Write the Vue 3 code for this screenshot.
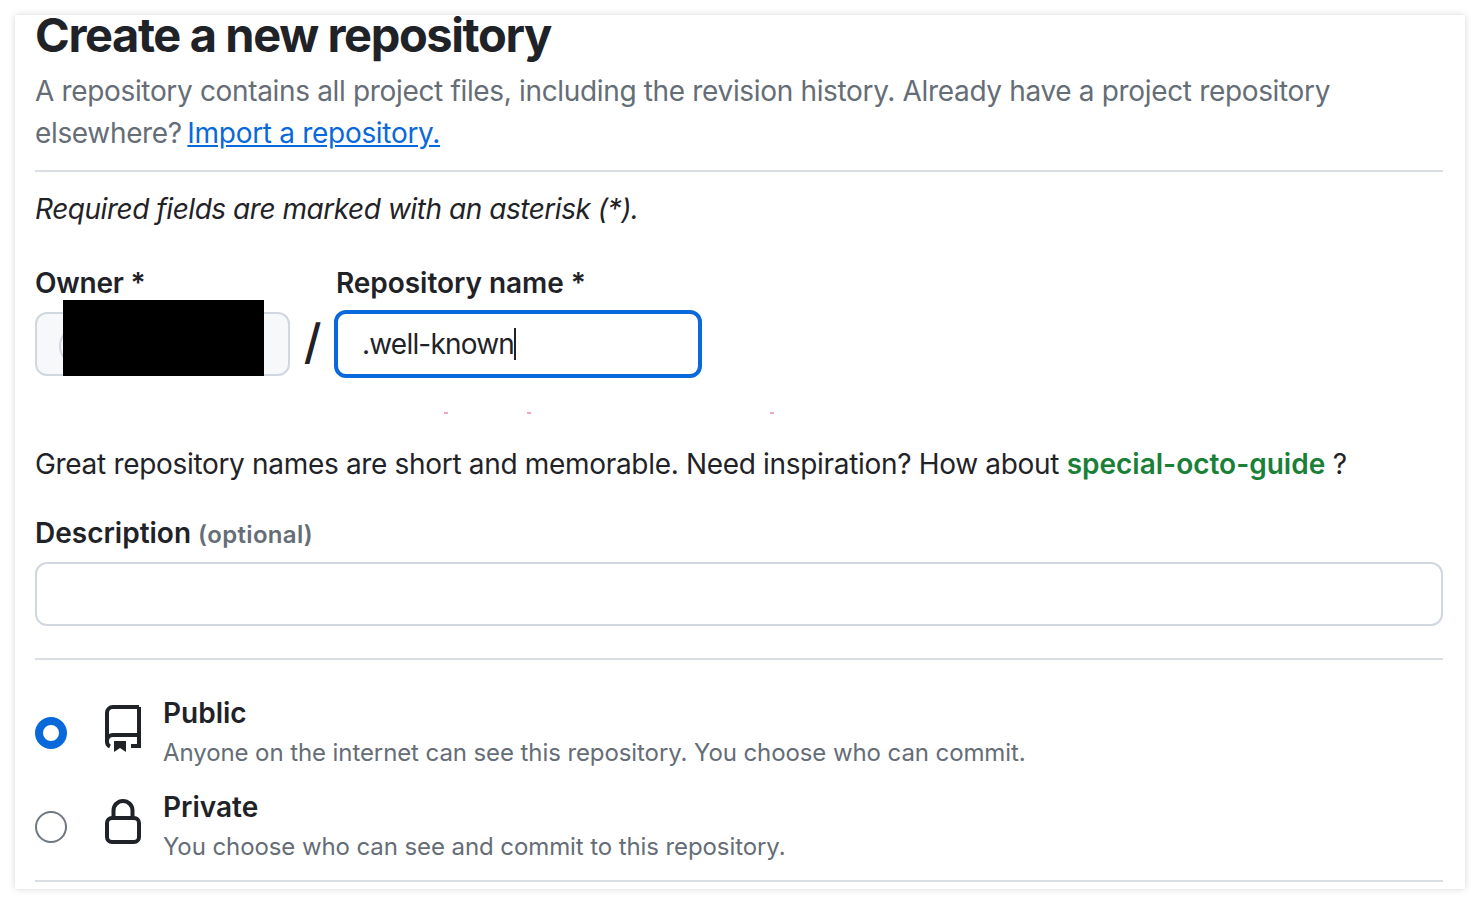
<template>
  <main class="page">
    <section class="card">
      <h1 class="title">Create a new repository</h1>
      <p class="lead">
        A repository contains all project files, including the revision history. Already have a project repository<br />
        elsewhere? <a class="link" href="#">Import a repository.</a>
      </p>
      <hr class="rule rule-top" />
      <p class="required">Required fields are marked with an asterisk (*).</p>

      <div class="names">
        <div class="owner">
          <label class="label owner-label">Owner *</label>
          <div class="owner-box">
            <span class="avatar"></span>
            <span class="redact"></span>
          </div>
        </div>
        <span class="slash">/</span>
        <div class="repo">
          <label class="label repo-label">Repository name *</label>
          <div class="repo-box"><span class="repo-text">.well-known</span><span class="caret"></span></div>
        </div>
      </div>

      <div class="specks">
        <i class="speck s1"></i>
        <i class="speck s2"></i>
        <i class="speck s3"></i>
      </div>

      <p class="hint">
        Great repository names are short and memorable. Need inspiration? How about
        <strong class="suggest">special-octo-guide</strong> ?
      </p>

      <div class="desc-label">Description <span class="optional">(optional)</span></div>
      <div class="desc-box"></div>
      <hr class="rule rule-mid" />

      <div class="option public">
        <span class="radio on"></span>
        <svg class="icon book" viewBox="0 0 36 48" fill="none" stroke="#1f2328" stroke-width="4">
          <path d="M34 2H8a6 6 0 0 0-6 6v29a5 5 0 0 0 3 4.5"/>
          <path d="M2 36a6 6 0 0 1 6-6h26"/>
          <path d="M34 2v39h-8"/>
          <path d="M9 36h12v11l-6-4-6 4Z" fill="#1f2328" stroke="none"/>
        </svg>
        <div class="option-text">
          <div class="option-title">Public</div>
          <div class="option-sub">Anyone on the internet can see this repository. You choose who can commit.</div>
        </div>
      </div>

      <div class="option private">
        <span class="radio"></span>
        <svg class="icon lock" viewBox="0 0 36 45" fill="none" stroke="#1f2328" stroke-width="4">
          <rect x="2" y="19" width="32" height="24" rx="5"/>
          <path d="M8.5 19v-7.5a9.5 9.5 0 0 1 19 0V19"/>
        </svg>
        <div class="option-text">
          <div class="option-title">Private</div>
          <div class="option-sub">You choose who can see and commit to this repository.</div>
        </div>
      </div>
      <hr class="rule rule-bottom" />
    </section>
  </main>
</template>

<script setup>
</script>

<style>
html, body { margin: 0; background: #fff; }
</style>

<style scoped>
.page {
  box-sizing: border-box;
  width: 1480px;
  height: 904px;
  padding: 15px;
  font-family: Inter, "Liberation Sans", sans-serif;
  color: #1f2328;
}
.card {
  box-sizing: border-box;
  height: 874px;
  padding: 0 22px 0 20px;
  background: #fff;
  box-shadow: 0 0 7px rgba(0, 0, 0, 0.16);
}
.title {
  margin: 0;
  font-size: 47px;
  line-height: 40px;
  font-weight: 700;
  letter-spacing: -1.39px;
}
.lead {
  margin: 15px 0 0;
  font-size: 28px;
  line-height: 42px;
  letter-spacing: -0.34px;
  color: #656d76;
}
.link { margin-left: -2px; color: #0969da; text-decoration: underline; letter-spacing: -0.3px; }
.rule {
  margin: 0;
  border: 0;
  height: 2px;
  background: #d8dee4;
}
.rule-top { margin-top: 16px; }
.required {
  margin: 19px 0 0;
  font-size: 28px;
  line-height: 36px;
  font-style: italic;
  letter-spacing: -0.46px;
}
.names { display: flex; align-items: flex-start; margin-top: 38px; }
.owner { width: 255px; position: relative; }
.label {
  display: block;
  font-size: 28px;
  line-height: 36px;
  font-weight: 600;
}
.owner-label { letter-spacing: -0.25px; }
.repo-label { padding-left: 2px; letter-spacing: -0.05px; }
.owner-box {
  box-sizing: border-box;
  position: relative;
  height: 64px;
  margin-top: 11px;
  background: #f6f8fa;
  border: 2px solid #d0d7de;
  border-radius: 12px;
}
.avatar {
  position: absolute;
  left: 22px;
  top: 12px;
  width: 40px;
  height: 40px;
  border-radius: 50%;
  border: 2px solid #d0d7de;
  box-sizing: border-box;
}
.redact {
  position: absolute;
  left: 26px;
  top: -14px;
  width: 201px;
  height: 76px;
  background: #000;
}
.slash {
  width: 44px;
  padding-left: 1px;
  box-sizing: border-box;
  margin-top: 45px;
  text-align: center;
  font-size: 48px;
  line-height: 64px;
  font-weight: 500;
}
.repo { width: 368px; }
.repo-box {
  box-sizing: border-box;
  height: 68px;
  margin-top: 9px;
  padding-left: 24px;
  display: flex;
  align-items: center;
  border: 4px solid #0969da;
  border-radius: 12px;
  font-size: 28px;
  letter-spacing: -0.8px;
}
.caret { width: 2px; height: 32px; background: #1f2328; }
.specks { position: relative; height: 2px; margin-top: 34px; }
.speck { position: absolute; top: 0; width: 4px; height: 2px; background: #f3a6b8; }
.s1 { left: 409px; }
.s2 { left: 492px; }
.s3 { left: 735px; }
.hint { margin: 32px 0 0; font-size: 28px; line-height: 36px; letter-spacing: -0.32px; }
.suggest { color: #1a7f37; font-weight: 600; letter-spacing: 0; }
.desc-label { margin-top: 33px; font-size: 28px; line-height: 36px; font-weight: 600; }
.optional { font-size: 24px; color: #656d76; letter-spacing: 0.33px; }
.desc-box {
  box-sizing: border-box;
  height: 64px;
  margin-top: 9px;
  border: 2px solid #d0d7de;
  border-radius: 12px;
}
.rule-mid { margin-top: 32px; }
.option { display: flex; position: relative; padding-left: 128px; }
.public { margin-top: 35px; }
.private { margin-top: 18px; }
.radio {
  box-sizing: border-box;
  position: absolute;
  left: 0;
  top: 22px;
  width: 32px;
  height: 32px;
  border-radius: 50%;
  border: 2px solid #6e7781;
}
.radio.on { border: 8px solid #0969da; }
.icon { position: absolute; left: 70px; top: 10px; width: 36px; }
.book { height: 48px; }
.lock { height: 45px; }
.option-title { font-size: 28px; line-height: 36px; font-weight: 600; }
.option-sub { margin-top: 4px; font-size: 24px; line-height: 36px; color: #656d76; letter-spacing: -0.09px; }
.rule-bottom { margin-top: 15px; }
</style>
